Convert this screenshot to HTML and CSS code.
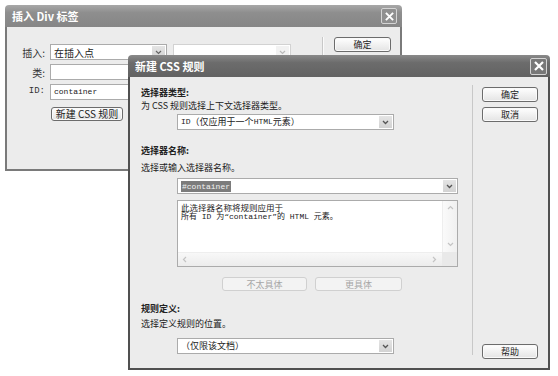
FILE: index.html
```html
<!DOCTYPE html>
<html>

<head>
  <meta charset="utf-8" />
  <title>新建 CSS 规则</title>
  <link rel="stylesheet" href="styles.css">
</head>

<body>
  <div class="desk">
    <!-- 插入 Div 标签 (behind) -->
    <div class="win win-back">
      <div class="titlebar">
        <span class="title">插入 Div 标签</span>
        <span class="close"><svg width="9" height="9" viewBox="0 0 10 10"><path d="M1 1L9 9M9 1L1 9" stroke="#fff" stroke-width="2.2"/></svg></span>
      </div>
      <div class="win-body">
        <div class="back-form">
          <div class="row">
            <label>插入:</label>
            <div class="field select w117">在插入点<span class="arrow"><svg width="7" height="5" viewBox="0 0 7 5"><path d="M1 1l2.5 2.5L6 1" fill="none" stroke="#666" stroke-width="1.2"/></svg></span></div>
            <div class="field select disabled w118"><span class="arrow"><svg width="7" height="5" viewBox="0 0 7 5"><path d="M1 1l2.5 2.5L6 1" fill="none" stroke="#bbb" stroke-width="1.2"/></svg></span></div>
          </div>
          <div class="row">
            <label>类:</label>
            <div class="field w241"></div>
          </div>
          <div class="row">
            <label class="mono">ID:</label>
            <div class="field w241 mono">container</div>
          </div>
          <div class="row row-btn">
            <button class="btn btn-new">新建 CSS 规则</button>
          </div>
        </div>
        <div class="back-side">
          <button class="btn">确定</button>
        </div>
      </div>
    </div>

    <!-- 新建 CSS 规则 (front) -->
    <div class="win win-front">
      <div class="titlebar">
        <span class="title">新建 CSS 规则</span>
        <span class="close"><svg width="10" height="10" viewBox="0 0 10 10"><path d="M1 1L9 9M9 1L1 9" stroke="#fff" stroke-width="2.2"/></svg></span>
      </div>
      <div class="win-body">
        <div class="front-main">
          <h3 class="sec">选择器类型:</h3>
          <p class="hint">为 CSS 规则选择上下文选择器类型。</p>
          <div class="field select type indent"><span class="mono">ID</span>（仅应用于一个 <span class="mono">HTML</span> 元素）<span class="arrow"><svg width="7" height="5" viewBox="0 0 7 5"><path d="M1 1l2.5 2.5L6 1" fill="none" stroke="#555" stroke-width="1.3"/></svg></span></div>

          <h3 class="sec sec-2">选择器名称:</h3>
          <p class="hint hint-2">选择或输入选择器名称。</p>
          <div class="field select combo indent"><span class="picked mono">#container</span><span class="arrow"><svg width="7" height="5" viewBox="0 0 7 5"><path d="M1 1l2.5 2.5L6 1" fill="none" stroke="#555" stroke-width="1.3"/></svg></span></div>
          <div class="memo indent">
            <div class="memo-text">
              <p>此选择器名称将规则应用于</p>
              <p class="mixed">所有 ID 为“container”的 HTML 元素。</p>
            </div>
            <div class="vscroll">
              <svg width="7" height="5" viewBox="0 0 7 5"><path d="M1 4l2.5-2.5L6 4" fill="none" stroke="#c4c4c4" stroke-width="1.2"/></svg>
              <svg width="7" height="5" viewBox="0 0 7 5"><path d="M1 1l2.5 2.5L6 1" fill="none" stroke="#c4c4c4" stroke-width="1.2"/></svg>
            </div>
            <div class="hscroll">
              <svg width="5" height="7" viewBox="0 0 5 7"><path d="M4 1L1.5 3.5L4 6" fill="none" stroke="#c4c4c4" stroke-width="1.2"/></svg>
              <svg width="5" height="7" viewBox="0 0 5 7"><path d="M1 1l2.5 2.5L1 6" fill="none" stroke="#c4c4c4" stroke-width="1.2"/></svg>
            </div>
            <div class="corner"></div>
          </div>
          <div class="specific">
            <button class="btn btn-off w85">不太具体</button>
            <button class="btn btn-off w87">更具体</button>
          </div>

          <h3 class="sec sec-3">规则定义:</h3>
          <p class="hint hint-3">选择定义规则的位置。</p>
          <div class="field select loc indent">（仅限该文档）<span class="arrow"><svg width="7" height="5" viewBox="0 0 7 5"><path d="M1 1l2.5 2.5L6 1" fill="none" stroke="#555" stroke-width="1.3"/></svg></span></div>
        </div>
        <div class="front-side">
          <button class="btn">确定</button>
          <button class="btn">取消</button>
          <button class="btn btn-help">帮助</button>
        </div>
      </div>
    </div>
  </div>
</body>

</html>
```

FILE: styles.css
```css
* {
  margin: 0;
  padding: 0;
  box-sizing: border-box;
}

body {
  background: #fff;
  font: 10px/1.3 "Noto Sans CJK SC", "Liberation Sans", sans-serif;
  color: #222;
}

button {
  font: inherit;
  cursor: pointer;
}

.mono {
  font-family: "Liberation Mono", "Noto Sans CJK SC", monospace;
  font-size: 8px;
}

.desk {
  position: relative;
  width: 558px;
  height: 376px;
  overflow: hidden;
}

/* windows */
.win {
  position: absolute;
  display: flex;
  flex-direction: column;
}
.win-back {
  left: 5px;
  top: 5px;
  width: 397px;
  height: 166px;
}
.win-front {
  left: 128px;
  top: 55px;
  width: 422px;
  height: 315px;
  font-size: 9px;
}

.titlebar {
  flex: 0 0 22px;
  display: flex;
  align-items: center;
  justify-content: space-between;
  padding: 0 5px 0 7px;
  border-radius: 4px 4px 0 0;
  color: #fff;
  font-size: 11px;
  font-weight: bold;
}
.win-back .titlebar {
  background: linear-gradient(#a8a8a8, #8e8e8e 35%, #868686);
}
.win-front .titlebar {
  padding-right: 3px;
  background: linear-gradient(#8a8a8a, #6c6c6c 35%, #626262);
}

.close {
  display: flex;
  align-items: center;
  justify-content: center;
  width: 16px;
  height: 16px;
  border: 1px solid #d4d4d4;
  border-radius: 2px;
  background: #909090;
}
.win-front .close {
  width: 17px;
  height: 17px;
  background: #787878;
}

.win-body {
  flex: 1;
  display: flex;
  background: #ececec;
  border: 2px solid #7a7a7a;
  border-top: 0;
}
.win-front .win-body {
  border-color: #505050;
}

/* fields */
.field {
  position: relative;
  display: flex;
  align-items: center;
  height: 16px;
  padding-left: 3px;
  background: #fff;
  border: 1px solid #ababab;
  white-space: nowrap;
}
.select .arrow {
  position: absolute;
  right: 1px;
  top: 1px;
  bottom: 1px;
  width: 13px;
  display: flex;
  align-items: center;
  justify-content: center;
  background: linear-gradient(#e4e4e4, #d2d2d2);
}
.select.disabled {
  border-color: #d2d2d2;
}
.select.disabled .arrow {
  background: #f2f2f2;
}

.w117 { width: 117px; }
.w118 { width: 118px; margin-left: 6px; }
.w241 { width: 241px; }
.w85 { width: 85px; }
.w87 { width: 87px; }

/* buttons */
.btn {
  height: 15px;
  border: 1px solid #6c6c6c;
  border-radius: 3px;
  background: linear-gradient(#fff, #e4e4e4);
  box-shadow: inset 0 0 0 1px #fafafa;
  color: #222;
  font-size: 9px;
  line-height: 13px;
}
.btn-off {
  height: 14px;
  border-color: #d0d0d0;
  background: #f3f3f3;
  box-shadow: none;
  color: #a6a6a6;
}

/* back dialog */
.back-form {
  width: 315px;
  padding-top: 17px;
  display: flex;
  flex-direction: column;
  gap: 4px;
}
.row {
  display: flex;
  align-items: center;
  height: 16px;
}
.row label {
  width: 38px;
  margin-right: 5px;
  text-align: right;
  color: #333;
}
.row label.mono {
  font-size: 9px;
}
.row-btn {
  margin-top: 3px;
  height: 14px;
}
.btn-new {
  width: 72px;
  height: 14px;
  margin-left: 44px;
  font-size: 10px;
  line-height: 12px;
}
.back-side {
  flex: 1;
  margin-top: 10px;
  padding-left: 11px;
  border-left: 1px solid #c8c8c8;
  box-shadow: inset 1px 0 0 #fafafa;
}
.back-side .btn {
  width: 57px;
}

/* front dialog */
.front-main {
  width: 342px;
  padding: 9px 0 0 11px;
}
.sec {
  font-size: 9px;
  font-weight: bold;
  line-height: 13px;
}
.hint {
  line-height: 13px;
}
.indent {
  margin-left: 36px;
}
.type {
  width: 217px;
  margin-top: 2px;
}
.sec-2 { margin-top: 14px; }
.hint-2 { margin-top: 4px; }
.combo {
  width: 281px;
  margin-top: 4px;
}
.picked {
  padding: 0 1px;
  background: #7c7c7c;
  color: #f2f2f2;
  line-height: 11px;
}

.memo {
  display: grid;
  grid-template-columns: 1fr 15px;
  grid-template-rows: 1fr 14px;
  width: 281px;
  height: 67px;
  margin-top: 6px;
  background: #fff;
  border: 1px solid #ababab;
}
.memo-text {
  padding: 0 0 0 3px;
  font-size: 8.5px;
  line-height: 12px;
}
.memo-text p {
  height: 10px;
  white-space: nowrap;
}
.memo-text .mixed {
  font-family: "Liberation Mono", "Noto Sans CJK SC", monospace;
  font-size: 8px;
}
.vscroll {
  display: flex;
  flex-direction: column;
  justify-content: space-between;
  align-items: center;
  padding: 4px 0 5px;
  background: linear-gradient(90deg, #fafafa, #f0f0f0);
  border-left: 1px solid #eee;
}
.hscroll {
  display: flex;
  justify-content: space-between;
  align-items: center;
  padding: 0 5px 0 4px;
  background: linear-gradient(#f8f8f8, #ececec);
  border-top: 1px solid #eee;
}
.corner {
  background: #e9e9e9;
}

.specific {
  display: flex;
  gap: 8px;
  margin: 10px 0 0 81px;
}

.sec-3 { margin-top: 11px; }
.hint-3 { margin-top: 2px; }
.loc {
  width: 217px;
  margin-top: 8px;
}

.front-side {
  flex: 1;
  display: flex;
  flex-direction: column;
  gap: 5px;
  padding: 10px 0 9px 10px;
  background: linear-gradient(#c8c8c8, #c8c8c8) no-repeat 0 8px / 1px 270px;
}
.front-side .btn {
  width: 56px;
}
.front-side .btn-help {
  margin-top: auto;
}
```
